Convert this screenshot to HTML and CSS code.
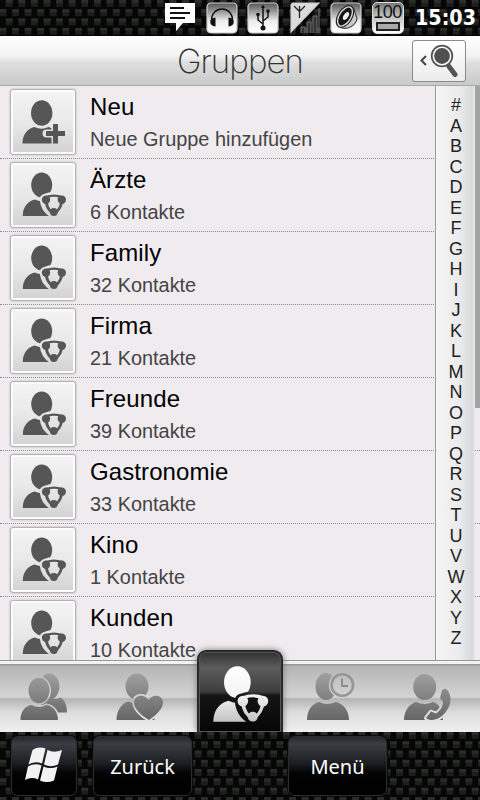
FILE: index.html
```
<!DOCTYPE html>
<html lang="de">
<head>
  <meta charset="UTF-8" />
  <meta name="viewport" content="width=device-width, initial-scale=1.0" />
  <title>Gruppen</title>
  <link rel="stylesheet" href="styles.css">
</head>
<body>

  <!-- Shared icon shapes -->
  <svg class="defs" width="0" height="0">
    <defs>
      <linearGradient id="chrome" x1="0" y1="0" x2="0" y2="1">
        <stop offset="0" stop-color="#555" />
        <stop offset="0.35" stop-color="#aaa" />
        <stop offset="0.6" stop-color="#eee" />
        <stop offset="1" stop-color="#fff" />
      </linearGradient>
      <linearGradient id="tabFill" gradientUnits="userSpaceOnUse" x1="0" y1="13" x2="0" y2="60">
        <stop offset="0" stop-color="#a0a0a0" />
        <stop offset="1" stop-color="#666" />
      </linearGradient>
      <linearGradient id="activeFill" gradientUnits="userSpaceOnUse" x1="0" y1="10" x2="0" y2="54">
        <stop offset="0" stop-color="#fff" />
        <stop offset="0.5" stop-color="#f4f4f4" />
        <stop offset="1" stop-color="#c4c4c4" />
      </linearGradient>
      <mask id="cutGroup" maskUnits="userSpaceOnUse" x="0" y="0" width="66" height="66">
        <rect width="66" height="66" fill="#fff" />
        <path d="M35.5 37.5Q44 34 52 37.5Q52 46 43.8 50.5Q36 46 35.5 37.5z" fill="#000" stroke="#000" stroke-width="11.5" stroke-linejoin="round" />
      </mask>
      <mask id="cutPlus" maskUnits="userSpaceOnUse" x="0" y="0" width="66" height="66">
        <rect width="66" height="66" fill="#fff" />
        <path d="M36.500 44.500h18M45.500 37v16" stroke="#000" stroke-width="8" stroke-linecap="round" />
      </mask>
      <mask id="cutFront" maskUnits="userSpaceOnUse" x="0" y="0" width="96" height="72">
        <rect width="96" height="72" fill="#fff" />
        <g fill="#000" stroke="#000" stroke-width="3">
          <ellipse cx="39" cy="30.500" rx="10.500" ry="12.800" />
          <path d="M20.500 60c0-8 4-14 11-15q8 4 15 0c7 1 11.500 7 11.500 15z" />
        </g>
      </mask>
      <mask id="cutHeart" maskUnits="userSpaceOnUse" x="0" y="0" width="96" height="72">
        <rect width="96" height="72" fill="#fff" />
        <path d="M53 60C46 56 38 49 38 42.500C38 35 48 33 52.500 40C57 33 67 35 67 42.500C67 49 59 56 53 60z" fill="#000" stroke="#000" stroke-width="3.500" />
      </mask>
      <mask id="cutClock" maskUnits="userSpaceOnUse" x="0" y="0" width="96" height="72">
        <rect width="96" height="72" fill="#fff" />
        <circle cx="54.300" cy="25" r="13.500" fill="#000" />
      </mask>
      <mask id="cutPhone" maskUnits="userSpaceOnUse" x="0" y="0" width="96" height="72">
        <rect width="96" height="72" fill="#fff" />
        <path d="M42 58L47 51.500L52 53.500C56 51 59 47 59 42L56 38L58 30.500Q61 27 64 31C69 38 66 47 61 53C55 60 47 62 42 58z" fill="#000" stroke="#000" stroke-width="4" stroke-linejoin="round" />
      </mask>

      <symbol id="icon-group" viewBox="0 0 66 66">
        <g mask="url(#cutGroup)">
          <ellipse cx="31.700" cy="23" rx="10.500" ry="12.500" />
          <path d="M12.800 54c0-9 5-15 12-16.500q7 3.500 14 0c6 1 10 8 10 16.500z" />
        </g>
        <!-- ring with three linked members -->
        <path fill-rule="evenodd" d="M35.500 34Q44 30.800 52.500 34Q55 46.500 43.800 53.500Q32.500 46.500 35.500 34zM38 36Q44 33.700 50 36Q51.500 45 43.800 50.500Q36.500 45 38 36z" />
        <circle cx="36" cy="37.800" r="4.200" />
        <circle cx="51.800" cy="37.800" r="4.200" />
        <circle cx="43.800" cy="50" r="3.900" />
      </symbol>
      <symbol id="icon-add" viewBox="0 0 66 66">
        <g mask="url(#cutPlus)">
          <ellipse cx="31.700" cy="24" rx="10.700" ry="12.800" />
          <path d="M12.500 54.500c0-9 5-15 12-16.500q7 3.500 14 0c4 1 7 4 7 9v7.500z" />
        </g>
        <path d="M36 42h7v-7h5v7h7v5h-7v7.500h-5v-7.500h-7z" />
      </symbol>
    </defs>
  </svg>

  <div class="phone">

    <header class="status">
      <svg class="status-icon bubble" viewBox="0 0 32 32">
        <path d="M1 1h30v20H19l-7 8v-8H1z" fill="#fff" />
        <path d="M6 6h14M6 11h20M6 16h15" stroke="#111" stroke-width="2" />
      </svg>
      <svg class="status-icon" viewBox="0 0 32 32">
        <rect class="plate" x="1" y="1" width="30" height="30" rx="4" />
        <path d="M5.500 19C5 3 27 3 26.500 19" fill="none" stroke="#111" stroke-width="1.500" />
        <path d="M9.500 15.500v9c-7 0-7-9 0-9zM22.500 15.500v9c7 0 7-9 0-9z" fill="#111" />
      </svg>
      <svg class="status-icon" viewBox="0 0 32 32">
        <rect class="plate" x="1" y="1" width="30" height="30" rx="4" />
        <path d="M16 4v22M16 22l-5-4v-5M16 19l5-4V9" fill="none" stroke="#111" stroke-width="1.500" />
        <path d="M16 2.500l2 3.500h-4zM19.500 7.500h3v3h-3z" fill="#111" />
        <circle cx="11" cy="12.500" r="1.800" fill="#111" />
        <circle cx="16" cy="26" r="2.500" fill="#111" />
      </svg>
      <svg class="status-icon" viewBox="0 0 32 32">
        <path class="plate light" d="M4 1h26L2 30V4q0-3 2-3z" />
        <path d="M5 4l5.500 5.500L16 4M10.500 4v12" fill="none" stroke="#222" stroke-width="1.300" />
        <path d="M12 31v-6h4v6M18 31V20h4v11M24 31V14h4v17M30 31V6" fill="#333" stroke="#777" stroke-width="1" />
      </svg>
      <svg class="status-icon" viewBox="0 0 32 32">
        <rect class="plate" x="1" y="1" width="30" height="30" rx="4" />
        <path d="M11 25.500c6 3 15-2 16-9l-3-9z" fill="#ccc" stroke="#444" stroke-width="1.200" />
        <ellipse cx="15" cy="14.500" rx="7" ry="12" transform="rotate(32 15 14.500)" fill="#ddd" stroke="#222" stroke-width="1.200" />
        <ellipse cx="15" cy="14.500" rx="5" ry="10" transform="rotate(32 15 14.500)" fill="#151515" />
        <ellipse cx="16" cy="14" rx="2.300" ry="4.500" transform="rotate(32 16 14)" fill="#eee" />
      </svg>
      <div class="status-icon battery">
        <span>100</span>
        <i></i>
      </div>
      <time class="clock">15:03</time>
    </header>

    <div class="titlebar">
      <h1>Gruppen</h1>
      <button class="search">
        <svg width="54" height="42" viewBox="0 0 54 42">
          <path d="M13 15l-4.500 4.500L13 24" fill="none" stroke="#444" stroke-width="2" />
          <path d="M36 25.500l6 8" stroke="#555" stroke-width="5" stroke-linecap="round" />
          <circle cx="29" cy="15" r="10.300" fill="#fff" stroke="#555" stroke-width="1.800" />
          <circle cx="29" cy="15" r="7.900" fill="#505050" />
        </svg>
      </button>
    </div>

    <main class="content">
      <ul class="groups">
        <li class="row">
          <span class="tile"><svg><use href="#icon-add" /></svg></span>
          <div class="text"><h2>Neu</h2><p>Neue Gruppe hinzufügen</p></div>
        </li>
        <li class="row">
          <span class="tile"><svg><use href="#icon-group" /></svg></span>
          <div class="text"><h2>Ärzte</h2><p>6 Kontakte</p></div>
        </li>
        <li class="row">
          <span class="tile"><svg><use href="#icon-group" /></svg></span>
          <div class="text"><h2>Family</h2><p>32 Kontakte</p></div>
        </li>
        <li class="row">
          <span class="tile"><svg><use href="#icon-group" /></svg></span>
          <div class="text"><h2>Firma</h2><p>21 Kontakte</p></div>
        </li>
        <li class="row">
          <span class="tile"><svg><use href="#icon-group" /></svg></span>
          <div class="text"><h2>Freunde</h2><p>39 Kontakte</p></div>
        </li>
        <li class="row">
          <span class="tile"><svg><use href="#icon-group" /></svg></span>
          <div class="text"><h2>Gastronomie</h2><p>33 Kontakte</p></div>
        </li>
        <li class="row">
          <span class="tile"><svg><use href="#icon-group" /></svg></span>
          <div class="text"><h2>Kino</h2><p>1 Kontakte</p></div>
        </li>
        <li class="row">
          <span class="tile"><svg><use href="#icon-group" /></svg></span>
          <div class="text"><h2>Kunden</h2><p>10 Kontakte</p></div>
        </li>
      </ul>

      <nav class="index">
        <span>#</span><span>A</span><span>B</span><span>C</span><span>D</span><span>E</span><span>F</span>
        <span>G</span><span>H</span><span>I</span><span>J</span><span>K</span><span>L</span><span>M</span>
        <span>N</span><span>O</span><span>P</span><span>Q</span><span>R</span><span>S</span><span>T</span>
        <span>U</span><span>V</span><span>W</span><span>X</span><span>Y</span><span>Z</span>
      </nav>
      <div class="scrollbar"></div>
    </main>

    <nav class="tabs">
      <a class="tab">
        <svg viewBox="0 0 96 72">
          <g mask="url(#cutFront)">
            <ellipse cx="49.500" cy="26.500" rx="10" ry="13" />
            <path d="M40 52.500c0-8 4-14 11-15q5 3 9 0c4 1 7 7 7 15z" />
          </g>
          <ellipse cx="39" cy="30.500" rx="10.500" ry="12.800" />
          <path d="M20.500 60c0-8 4-14 11-15q8 4 15 0c7 1 11.500 7 11.500 15z" />
        </svg>
      </a>
      <a class="tab">
        <svg viewBox="0 0 96 72">
          <g mask="url(#cutHeart)">
            <ellipse cx="41" cy="26.500" rx="11.500" ry="13" />
            <path d="M20.500 60c0-9 5-17 12-18.500q8 4 16 0c6 1 10 9 10 18.500z" />
          </g>
          <path d="M53 60C46 56 38 49 38 42.500C38 35 48 33 52.500 40C57 33 67 35 67 42.500C67 49 59 56 53 60z" />
        </svg>
      </a>
      <a class="tab active">
        <svg viewBox="0 0 66 66"><use href="#icon-group" /></svg>
      </a>
      <a class="tab">
        <svg viewBox="0 0 96 72">
          <ellipse cx="38" cy="26.500" rx="10.500" ry="13.500" mask="url(#cutClock)" />
          <path d="M19 60c0-9 4-16 12-18q8 4 17 0c8 2 13 9 13 18z" />
          <circle cx="54.300" cy="25" r="10.800" fill="none" stroke="#969696" stroke-width="2.600" />
          <path d="M54 18.500v7.500h6" fill="none" stroke="#8c8c8c" stroke-width="2" />
        </svg>
      </a>
      <a class="tab">
        <svg viewBox="0 0 96 72">
          <g mask="url(#cutPhone)">
            <ellipse cx="40.700" cy="27" rx="11.500" ry="13" />
            <path d="M20 60c0-9 5-16 12-18q9 4 17 0c6 1 10 9 10 18z" />
          </g>
          <path d="M42 58L47 51.500L52 53.500C56 51 59 47 59 42L56 38L58 30.500Q61 27 64 31C69 38 66 47 61 53C55 60 47 62 42 58z" />
        </svg>
      </a>
    </nav>

    <footer class="softkeys">
      <button class="key start">
        <svg width="38" height="36" viewBox="0 0 38 36">
          <path d="M7.500 3q5.500-4 13-1.500L17 16.500q-7-3-13.500 1zM22.500 3q6.500 3.500 14.500 0L33 17.500q-7.500 3.500-14 0zM3 19.500q7-4 13.500-1L13 32.500q-6.500-3-13 .5zM18.500 19.500q7 3 14 0L29 33.500q-7.500 3-14 0z" fill="#f2f2f2" />
        </svg>
      </button>
      <button class="key back">Zurück</button>
      <button class="key menu">Menü</button>
    </footer>

  </div>

</body>
</html>
```
FILE: styles.css
```
* {
  box-sizing: border-box;
}
body {
  margin: 0;
  font-family: "Liberation Sans", Arial, sans-serif;
  background: #000;
}
h1, h2, p, ul {
  margin: 0;
  padding: 0;
  font-weight: normal;
}
.defs {
  display: block;
}
.phone {
  width: 480px;
  height: 800px;
  display: flex;
  flex-direction: column;
  overflow: hidden;
}

/* carbon weave behind the system bars */
.status, .softkeys {
  background-color: #050605;
  background-image:
    conic-gradient(from 90deg at 5.6px 3px, transparent 0 270deg, #2b2d2a 270deg),
    conic-gradient(from 90deg at 5.6px 3px, transparent 0 270deg, #2b2d2a 270deg),
    conic-gradient(from 90deg at 5.6px 7px, transparent 0 270deg, #1c1e1c 270deg),
    conic-gradient(from 90deg at 5.6px 7px, transparent 0 270deg, #1c1e1c 270deg);
  background-size: 12.6px 18.6px;
  background-position: 0 0, 6.3px 9.3px;
}
.status {
  height: 36px;
  flex: none;
  display: flex;
  align-items: center;
  gap: 9.5px;
  padding-left: 164px;
}
.status-icon {
  width: 32px;
  height: 32px;
  flex: none;
}
.plate {
  fill: url(#chrome);
  stroke: #ccc;
  stroke-width: 1.2;
}
.plate.light {
  fill: #dcdcdc;
}
.battery {
  display: flex;
  flex-direction: column;
  align-items: center;
  border: 1px solid #ddd;
  border-radius: 5px;
  background: linear-gradient(#777, #bbb 40%, #fff);
  color: #111;
  font-size: 18px;
  line-height: 19px;
  letter-spacing: -0.5px;
}
.battery i {
  width: 24px;
  height: 9px;
  border: 2px solid #222;
  background: #aaa;
}
.clock {
  margin-left: 2px;
  color: #fff;
  font: bold 21.3px/36px "DejaVu Sans Condensed", "DejaVu Sans", sans-serif;
}

.titlebar {
  height: 50px;
  flex: none;
  display: grid;
  grid-template-columns: 68px 1fr 54px;
  align-items: center;
  padding-right: 14px;
  background: linear-gradient(#fff, #f3f3f3 40%, #dcdddc 56%, #c9caca);
  border-bottom: 1px solid #aaa;
}
.titlebar h1 {
  grid-column: 2;
  text-align: center;
  font: 200 33px/50px Inter, sans-serif;
  letter-spacing: -0.9px;
  color: #333;
}
.search {
  width: 54px;
  height: 42px;
  padding: 0;
  border: 1px solid #8a8a8a;
  border-radius: 3px;
  background: linear-gradient(#fff, #ececec);
}
.search svg {
  display: block;
}

.content {
  flex: 1;
  min-height: 0;
  display: grid;
  grid-template: 574px / 435px 40px 5px;
  background: #efebef;
  overflow: hidden;
}
.groups {
  grid-area: 1 / 1 / 2 / 4;
  list-style: none;
}
.row {
  height: 73px;
  display: flex;
  gap: 14px;
  padding: 3px 0 0 10px;
  border-bottom: 1px dotted #8d8a8d;
}
.tile {
  width: 66px;
  height: 66px;
  border: 1px solid #b4b4b4;
  border-radius: 3px;
  background: linear-gradient(#f4f4f4, #e9e9e9 50%, #d2d2d2);
  box-shadow: inset 0 0 0 2px #fcfcfc, 0 0 2px #aaa;
}
.tile svg {
  display: block;
  width: 66px;
  height: 66px;
  margin: -1px;
  fill: #565656;
}
.text h2 {
  font-size: 24px;
  line-height: 28px;
  margin-top: 4px;
  letter-spacing: 0.1px;
  color: #000;
}
.text p {
  font-size: 19.9px;
  line-height: 24px;
  margin-top: 6px;
  color: #444;
}
.index {
  grid-area: 1 / 2;
  display: flex;
  flex-direction: column;
  padding-top: 9px;
  border-left: 1px solid #999;
  background: linear-gradient(90deg, #f5f5f6, #ebebed 60%, #d6d9d9 92%, #e8e8e8);
}
.index span {
  height: 20.5px;
  line-height: 21px;
  font-size: 18px;
  text-align: center;
  padding-left: 1px;
  color: #222;
}
.scrollbar {
  grid-area: 1 / 3;
  height: 322px;
  background: #a3a3a3;
}

.tabs {
  height: 72px;
  flex: none;
  display: grid;
  grid-template-columns: repeat(5, 96px);
  background: linear-gradient(#999 0 1px, #f2f2f2 1px 4px, #999 4px 5px, #b4b4b4 6px, #d6d5d6 37px, #b6b5b6 39px, #dcdcdc 52px, #f0eff0);
}
.tab svg {
  display: block;
  width: 96px;
  height: 72px;
  fill: url(#tabFill);
}
.tab.active {
  width: 86px;
  height: 82px;
  margin: -10px 0 0 5px;
  border: 2px solid #292929;
  border-bottom: 0;
  border-radius: 9px 9px 0 0;
  background: linear-gradient(#303030, #5c5c5c 20%, #3d3d3d 50%, #151515 54%, #050505);
  box-shadow: inset 0 0 0 1px #555, 0 0 6px #777;
  overflow: hidden;
}
.tab.active svg {
  width: 84px;
  height: 84px;
  margin: 1px 0 0 -2px;
  fill: url(#activeFill);
}

.softkeys {
  height: 68px;
  flex: none;
  display: flex;
  padding: 4px 0 0 11px;
}
.key {
  height: 60px;
  padding: 0;
  border: 1px solid #2b2d2b;
  border-radius: 7px;
  background: linear-gradient(#25282d, #3a3e44 12%, #1c1e22 45%, #030304 62%, #000);
  box-shadow: 0 0 0 1px #0a0a0a;
  color: #fff;
  font: 20px "Noto Sans", sans-serif;
}
.start {
  width: 66px;
}
.start svg {
  display: block;
  margin: -2px auto 0;
}
.back {
  width: 99px;
  margin-left: 16px;
}
.menu {
  width: 99px;
  margin-left: 96px;
}
```
